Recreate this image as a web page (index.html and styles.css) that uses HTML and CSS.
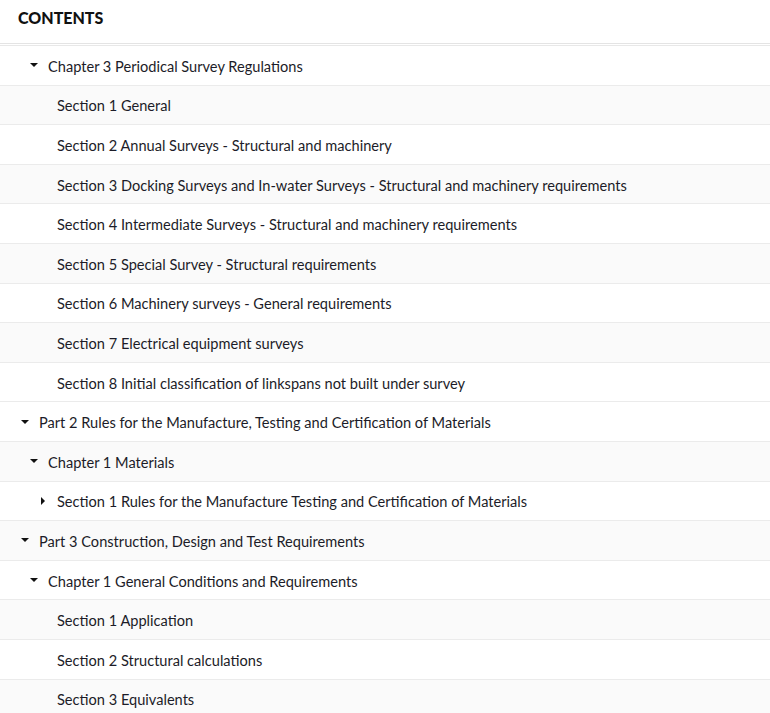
FILE: index.html
```html
<!DOCTYPE html>
<html lang="en">
<head>
  <meta charset="UTF-8">
  <meta name="viewport" content="width=device-width, initial-scale=1.0">
  <title>Contents</title>
  <link rel="stylesheet" href="styles.css">
</head>
<body>

<div class="header">CONTENTS</div>

<ul class="toc">
  <li class="row lvl2"><span class="caret down"></span>Chapter 3 Periodical Survey Regulations</li>
  <li class="row lvl3 alt"><span class="caret none"></span>Section 1 General</li>
  <li class="row lvl3"><span class="caret none"></span>Section 2 Annual Surveys - Structural and machinery</li>
  <li class="row lvl3 alt"><span class="caret none"></span>Section 3 Docking Surveys and In-water Surveys - Structural and machinery requirements</li>
  <li class="row lvl3"><span class="caret none"></span>Section 4 Intermediate Surveys - Structural and machinery requirements</li>
  <li class="row lvl3 alt"><span class="caret none"></span>Section 5 Special Survey - Structural requirements</li>
  <li class="row lvl3"><span class="caret none"></span>Section 6 Machinery surveys - General requirements</li>
  <li class="row lvl3 alt"><span class="caret none"></span>Section 7 Electrical equipment surveys</li>
  <li class="row lvl3"><span class="caret none"></span>Section 8 Initial classification of linkspans not built under survey</li>
  <li class="row lvl1"><span class="caret down"></span>Part 2 Rules for the Manufacture, Testing and Certification of Materials</li>
  <li class="row lvl2 alt"><span class="caret down"></span>Chapter 1 Materials</li>
  <li class="row lvl3"><span class="caret right"></span>Section 1 Rules for the Manufacture Testing and Certification of Materials</li>
  <li class="row lvl1 alt"><span class="caret down"></span>Part 3 Construction, Design and Test Requirements</li>
  <li class="row lvl2"><span class="caret down"></span>Chapter 1 General Conditions and Requirements</li>
  <li class="row lvl3 alt"><span class="caret none"></span>Section 1 Application</li>
  <li class="row lvl3"><span class="caret none"></span>Section 2 Structural calculations</li>
  <li class="row lvl3 alt"><span class="caret none"></span>Section 3 Equivalents</li>
</ul>

</body>
</html>
```

FILE: styles.css
```css
body {
  margin: 0;
  font-family: Lato, "Open Sans", sans-serif;
  color: #1c1c28;
  background: #fff;
  overflow: hidden;
}
.header {
  height: 43px;
  padding-left: 18px;
  line-height: 35px;
  font-size: 16px;
  font-weight: 900;
  color: #111;
  border-bottom: 1px solid #e4e4e4;
}
.toc {
  list-style: none;
  margin: 1px 0 0 0;
  padding: 0;
  border-top: 1px solid #e8e8e8;
}
.row {
  box-sizing: border-box;
  height: 39.6px;
  padding-top: 2px;
  display: flex;
  align-items: center;
  font-size: 14.6px;
  border-bottom: 1px solid #ebebeb;
  background: #fff;
}
.row.alt {
  background: #fafafa;
}
.lvl1 { padding-left: 21px; }
.lvl2 { padding-left: 30px; }
.lvl3 { padding-left: 39px; }
.caret {
  width: 8px;
  height: 8px;
  margin-right: 10px;
  position: relative;
  flex: none;
}
.caret.down::before {
  content: "";
  position: absolute;
  left: 0;
  top: 1px;
  border-left: 4px solid transparent;
  border-right: 4px solid transparent;
  border-top: 4px solid #111;
}
.caret.right::before {
  content: "";
  position: absolute;
  left: 2px;
  top: -1px;
  border-top: 4px solid transparent;
  border-bottom: 4px solid transparent;
  border-left: 4px solid #111;
}
```
